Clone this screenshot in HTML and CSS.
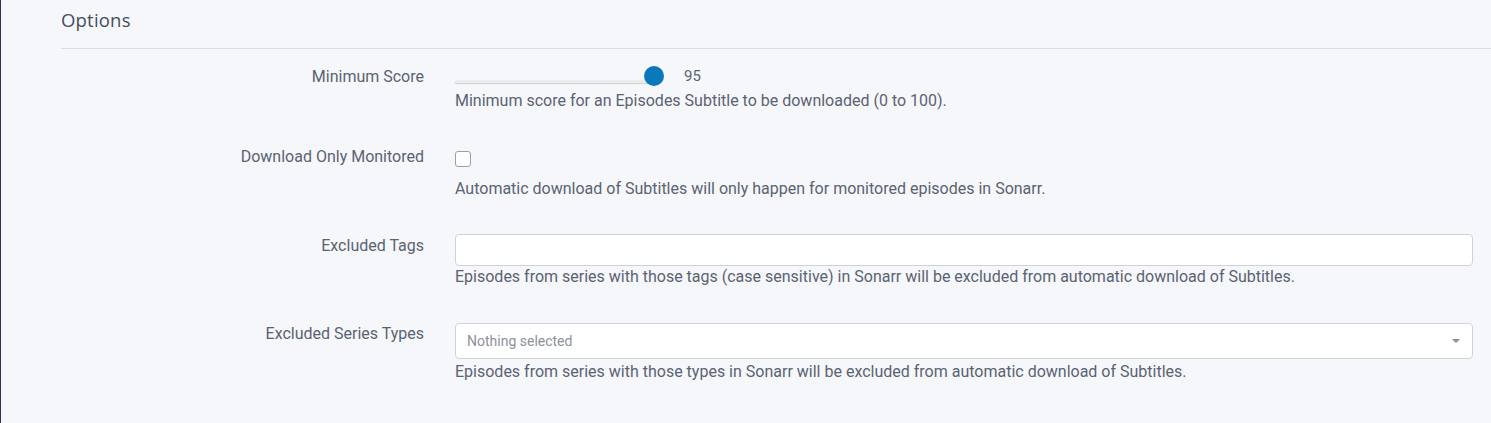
FILE: index.html
```html
<!DOCTYPE html>
<html>
<head>
<meta charset="utf-8">
<link rel="stylesheet" href="styles.css">
</head>
<body>
<div class="page">
  <div class="section">
    <h2 class="title">Options</h2>
    <div class="rows">
      <div class="row row-score">
        <div class="label">Minimum Score</div>
        <div class="field">
          <div class="slider-line">
            <div class="slider">
              <div class="track"></div>
              <div class="thumb"></div>
            </div>
            <span class="value">95</span>
          </div>
          <div class="help">Minimum score for an Episodes Subtitle to be downloaded (0 to 100).</div>
        </div>
      </div>
      <div class="row row-check">
        <div class="label">Download Only Monitored</div>
        <div class="field">
          <div class="check-line"><span class="checkbox"></span></div>
          <div class="help help-check">Automatic download of Subtitles will only happen for monitored episodes in Sonarr.</div>
        </div>
      </div>
      <div class="row row-tags">
        <div class="label">Excluded Tags</div>
        <div class="field">
          <div class="input"></div>
          <div class="help">Episodes from series with those tags (case sensitive) in Sonarr will be excluded from automatic download of Subtitles.</div>
        </div>
      </div>
      <div class="row row-types">
        <div class="label">Excluded Series Types</div>
        <div class="field">
          <div class="select">
            <span class="placeholder">Nothing selected</span>
            <span class="caret"></span>
          </div>
          <div class="help">Episodes from series with those types in Sonarr will be excluded from automatic download of Subtitles.</div>
        </div>
      </div>
    </div>
  </div>
</div>
</body>
</html>
```

FILE: styles.css
```css
html, body {
  margin: 0;
  padding: 0;
}
body {
  background: #f6f7fb;
  font-family: Roboto, "Liberation Sans", sans-serif;
  font-size: 16px;
  color: #5a6372;
  width: 1491px;
  height: 423px;
  overflow: hidden;
}
.page {
  border-left: 1px solid #2d3452;
  height: 423px;
  box-sizing: border-box;
  padding-left: 60px;
}
.title {
  margin: 0;
  padding-top: 8px;
  height: 49px;
  box-sizing: border-box;
  border-bottom: 1px solid #dcdde4;
  font-family: "Open Sans", "Noto Sans", sans-serif;
  font-weight: 400;
  font-size: 18.5px;
  line-height: 24px;
  color: #454d5e;
  letter-spacing: 0.2px;
}
.rows {
  display: flex;
  flex-direction: column;
}
.row {
  display: flex;
}
.label {
  width: 363px;
  text-align: right;
  line-height: 24px;
  flex: none;
}
.field {
  margin-left: 31px;
  flex: 1;
  padding-right: 18px;
}
.help {
  line-height: 24px;
}
.row-score { padding-top: 16px; }
.slider-line {
  display: flex;
  align-items: center;
  height: 24px;
}
.slider {
  position: relative;
  width: 209px;
  height: 24px;
}
.track {
  position: absolute;
  left: 0;
  right: 8px;
  top: 15px;
  height: 3px;
  background: #ececec;
  border-radius: 2px;
  box-shadow: 0 1px 1px rgba(0,0,0,0.16);
}
.thumb {
  position: absolute;
  right: 0;
  top: 1px;
  width: 20px;
  height: 20px;
  border-radius: 50%;
  background: #0a78ba;
}
.value {
  margin-left: 20px;
  line-height: 24px;
  font-size: 15px;
  margin-top: -2px;
}
.row-check { padding-top: 32px; }
.check-line {
  height: 24px;
  display: flex;
  align-items: flex-start;
}
.checkbox {
  margin-top: 6px;
  width: 14px;
  height: 14px;
  border: 1px solid #9aa0a8;
  border-radius: 3px;
  background: #ffffff;
}
.help-check { margin-top: 8px; }
.row-tags { padding-top: 33px; }
.input {
  height: 30px;
  background: #ffffff;
  border: 1px solid #ced3db;
  border-radius: 4px;
  margin-top: 0;
}
.row-tags .help { margin-top: -1px; }
.row-types { padding-top: 33px; }
.select {
  height: 34px;
  background: #ffffff;
  border: 1px solid #ced3db;
  border-radius: 4px;
  display: flex;
  align-items: center;
  justify-content: space-between;
  padding: 0 12px 0 11px;
  margin-top: 1px;
}
.placeholder {
  font-size: 14px;
  color: #8d929a;
}
.caret {
  width: 0;
  height: 0;
  border-left: 4px solid transparent;
  border-right: 4px solid transparent;
  border-top: 4px solid #8f8f8f;
}
.row-types .help { margin-top: 1px; }
```
